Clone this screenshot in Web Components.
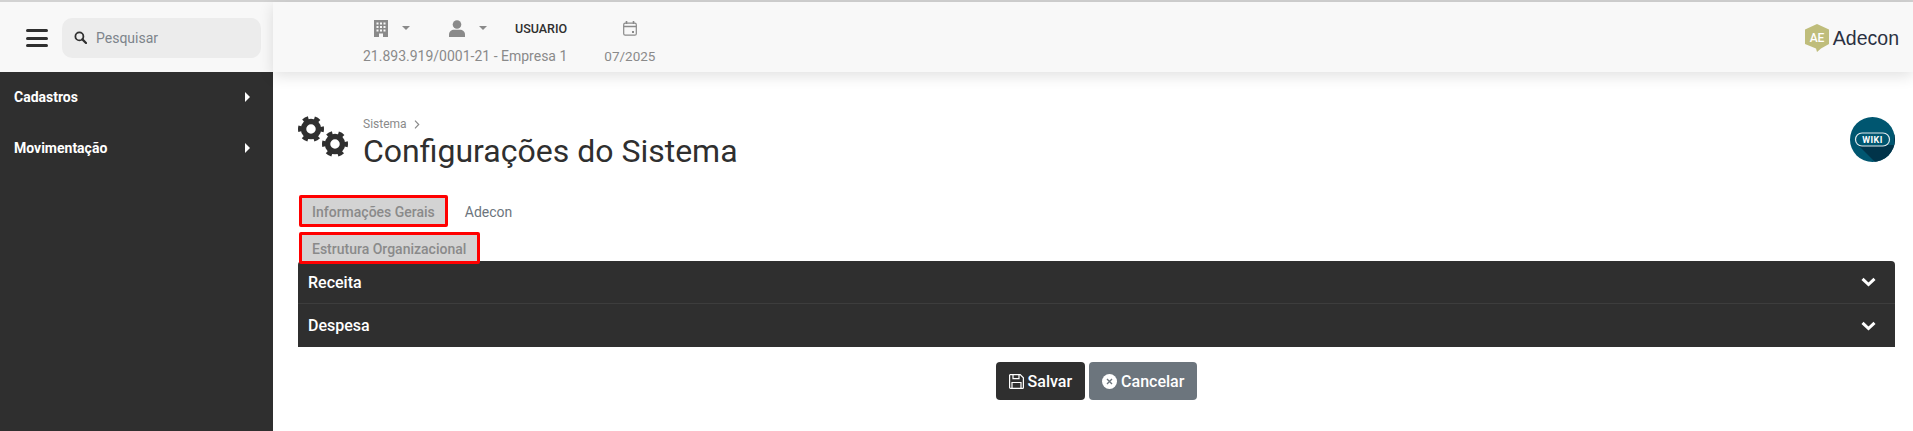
<!DOCTYPE html>
<html lang="pt-BR">
<head>
<meta charset="utf-8">
<title>Configurações do Sistema</title>
<style>
html,body{margin:0;padding:0;height:100%;background:#fff;overflow:hidden}
body{font-family:Roboto,sans-serif}
</style>
</head>
<body>
<app-shell>
    <side-menu slot="side">
        <menu-item>Cadastros</menu-item>
        <menu-item>Movimentação</menu-item>
    </side-menu>
    <top-bar slot="top"></top-bar>
    <page-head slot="main" crumb="Sistema" title="Configurações do Sistema"></page-head>
    <tab-row slot="main">
        <tab-link active>Informações Gerais</tab-link>
        <tab-link>Adecon</tab-link>
        <tab-link active second>Estrutura Organizacional</tab-link>
    </tab-row>
    <acc-panel slot="main">
        <acc-row>Receita</acc-row>
        <acc-row>Despesa</acc-row>
    </acc-panel>
    <form-actions slot="main"></form-actions>
</app-shell>

<script>
class AppShell extends HTMLElement{
    connectedCallback(){
        this.attachShadow({mode:"open"})
        this.shadowRoot.innerHTML=`
        <style>
        :host{display:flex;flex-direction:column;height:431px;box-sizing:border-box;border-top:2px solid #d2d2d2}
        .body{flex:1;display:flex;min-height:0}
        .left{width:273px;flex:none;display:flex;flex-direction:column}
        .right{flex:1;min-width:0;display:flex;flex-direction:column}
        main{flex:1;padding:39px 18px 0 25px}
        </style>
        <div class="body">
            <div class="left"><slot name="side"></slot></div>
            <div class="right">
                <slot name="top"></slot>
                <main><slot name="main"></slot></main>
            </div>
        </div>`
    }
}

class SideMenu extends HTMLElement{
    connectedCallback(){
        this.attachShadow({mode:"open"})
        this.shadowRoot.innerHTML=`
        <style>
        :host{display:flex;flex-direction:column;flex:1}
        .brand{height:70px;background:#f8f8f8;display:flex;align-items:center;padding-left:26px;gap:14px;box-sizing:border-box}
        .burger{width:22px;height:18px;display:flex;flex-direction:column;justify-content:space-between;margin-top:2px}
        .burger i{display:block;height:3px;background:#2f2f2f;border-radius:2px}
        .search{width:199px;height:40px;margin-top:1px;background:#ececec;border-radius:10px;display:flex;align-items:center;padding-left:12px;box-sizing:border-box;gap:9px;
            font:14px Roboto,sans-serif;color:#7d848b}
        .nav{flex:1;background:#2f2f2f;padding-top:12px}
        </style>
        <div class="brand">
            <div class="burger"><i></i><i></i><i></i></div>
            <div class="search">
                <svg width="13" height="13" viewBox="0 0 13 13" fill="none" stroke="#2f2f2f"><circle cx="5.4" cy="5.4" r="4" stroke-width="1.8"/><path d="M8.4 8.4l3.6 3.6" stroke-width="2.2" stroke-linecap="round"/></svg>
                <span>Pesquisar</span>
            </div>
        </div>
        <div class="nav"><slot></slot></div>`
    }
}

class MenuItem extends HTMLElement{
    connectedCallback(){
        this.attachShadow({mode:"open"})
        this.shadowRoot.innerHTML=`
        <style>
        :host{display:flex;align-items:center;justify-content:space-between;height:26px;margin-bottom:25px;padding:0 23px 0 14px;
            font:700 14px Roboto,sans-serif;color:#fff}
        .arrow{width:0;height:0;border-left:5.5px solid #fff;border-top:5px solid transparent;border-bottom:5px solid transparent}
        </style>
        <slot></slot><span class="arrow"></span>`
    }
}

class TopBar extends HTMLElement{
    connectedCallback(){
        this.attachShadow({mode:"open"})
        this.shadowRoot.innerHTML=`
        <style>
        :host{display:flex;height:70px;background:#f8f8f8;box-shadow:0 4px 14px rgba(0,0,0,.12);position:relative;
            font:14px Roboto,sans-serif;color:#8a8a8a;padding-left:90px;padding-right:14px;box-sizing:border-box;align-items:flex-start}
        .col{display:flex;flex-direction:column;margin-top:14px}
        .icons{display:flex;align-items:center;height:24px;margin-bottom:8px}
        .caret{width:0;height:0;border-top:4px solid #8a8a8a;border-left:4px solid transparent;border-right:4px solid transparent;margin:0 0 0 14px}
        .user{font-weight:500;font-size:12.5px;color:#2f2f2f;margin-left:28px}
        .date{margin-left:37px;align-items:center;font-size:13.5px}
        .logo{margin-left:auto;display:flex;align-items:center;gap:4px;margin-top:22px;
            font:19.5px "Liberation Sans",Arial,sans-serif;color:#2b3142}
        </style>
        <div class="col">
            <div class="icons">
                <svg style="margin-left:11px" width="14" height="17" viewBox="0 0 14 17"><path fill="#8a8a8a" fill-rule="evenodd" d="M0 0h14v17H9v-3.500H5V17H0zM2.500 2.500v2h2v-2zM6 2.500v2h2v-2zM9.500 2.500v2h2v-2zM2.500 6v2h2V6zM6 6v2h2V6zM9.500 6v2h2V6zM2.500 9.500v2h2v-2zM6 9.500v2h2v-2zM9.500 9.500v2h2v-2z"/></svg>
                <span class="caret"></span>
                <svg style="margin-left:39px" width="16" height="17" viewBox="0 0 16 17" fill="#8a8a8a"><circle cx="8" cy="4.500" r="4.300"/><path d="M0 17v-2.500C0 11.500 2.500 9.800 5 9.800h6c2.500 0 5 1.700 5 4.700V17z"/></svg>
                <span class="caret"></span>
                <span class="user">USUARIO</span>
            </div>
            <span>21.893.919/0001-21 - Empresa 1</span>
        </div>
        <div class="col date">
            <div class="icons">
                <svg width="14" height="15" viewBox="0 0 14 15" fill="none" stroke="#8a8a8a"><rect x=".7" y="2.200" width="12.600" height="12" rx="1.500" stroke-width="1.200"/><path d="M.7 5.500h12.600M3.500 0v3M10.500 0v3" stroke-width="1.600"/><rect x="9" y="10" width="2" height="2" fill="#8a8a8a" stroke="none"/></svg>
            </div>
            <span>07/2025</span>
        </div>
        <div class="logo">
            <svg width="24" height="28" viewBox="0 0 24 28"><path fill="#bfbd7b" d="M12 0l12 5.500v14.500l-8 4.500-4 3.500-1-3.500-11-4.500V5.500z"/><text x="12" y="18" text-anchor="middle" font-family="Roboto,sans-serif" font-weight="500" font-size="12" fill="#fff">AE</text></svg>
            <span>Adecon</span>
        </div>`
    }
}

class PageHead extends HTMLElement{
    connectedCallback(){
        this.attachShadow({mode:"open"})
        const gear=(cx,cy)=>`
            <circle cx="${cx}" cy="${cy}" r="7.500" fill="none" stroke="#2f2f2f" stroke-width="5.500"/>
            <circle cx="${cx}" cy="${cy}" r="11" fill="none" stroke="#2f2f2f" stroke-width="4" stroke-dasharray="5.500 6.020" stroke-dashoffset="2.750"/>`
        this.shadowRoot.innerHTML=`
        <style>
        :host{display:flex;align-items:flex-start;height:84px;color:#2f2f2f;font-family:Roboto,sans-serif}
        .gears{flex:none;margin:5px 15px 0 0}
        .txt{flex:1;display:flex;flex-direction:column;margin-top:6px}
        .crumb{font-size:12px;line-height:14px;color:#8a8a8a;display:flex;align-items:center;gap:7px}
        h1{margin:1px 0 0;font-weight:400;font-size:32px;line-height:38px;color:#2f2f2f}
        .wiki{flex:none;margin-top:6px}
        </style>
        <svg class="gears" width="50" height="42" viewBox="0 0 50 42">${gear(13,13)}${gear(37,28)}</svg>
        <div class="txt">
            <div class="crumb"><span>${this.getAttribute('crumb')}</span><svg width="6" height="9" viewBox="0 0 6 9" fill="none" stroke="#8a8a8a" stroke-width="1.200"><path d="M1 .7l3.700 3.800L1 8.300"/></svg></div>
            <h1>${this.getAttribute('title')}</h1>
        </div>
        <svg class="wiki" width="45" height="45" viewBox="0 0 45 45">
            <defs><clipPath id="c"><circle cx="22.500" cy="22.500" r="22.500"/></clipPath></defs>
            <circle cx="22.500" cy="22.500" r="22.500" fill="#005670"/>
            <path clip-path="url(#c)" fill="#01344a" d="M8 28h36V17l8 8v25H30z"/>
            <rect x="5.500" y="16" width="34" height="13" rx="6.500" fill="#005670" stroke="#dfe8ec" stroke-width="1.200"/>
            <text x="22.500" y="26" text-anchor="middle" font-family="Roboto,sans-serif" font-weight="700" font-size="9" letter-spacing=".4" fill="#fff">WIKI</text>
        </svg>`
    }
}

class TabRow extends HTMLElement{
    connectedCallback(){
        this.attachShadow({mode:"open"})
        this.shadowRoot.innerHTML=`
        <style>
        :host{display:flex;flex-wrap:wrap;width:400px;row-gap:5px;margin-left:1px;column-gap:1px}
        </style>
        <slot></slot>`
    }
}

class TabLink extends HTMLElement{
    connectedCallback(){
        this.attachShadow({mode:"open"})
        this.shadowRoot.innerHTML=`
        <style>
        :host{display:flex;align-items:center;box-sizing:border-box;height:32px;padding:2px 16px 0;
            font:14px Roboto,sans-serif;color:#6c757d}
        :host([active]){background:#d3d3d3;border:3px solid #f00;border-radius:2px;padding:2px 10px 0;font-weight:500;color:#8a8a8a}
        :host([second]){flex-basis:181px;flex-grow:0;margin-bottom:-3px;position:relative;z-index:1}
        </style>
        <slot></slot>`
    }
}

class AccPanel extends HTMLElement{
    connectedCallback(){
        this.attachShadow({mode:"open"})
        this.shadowRoot.innerHTML=`
        <style>
        :host{display:block;background:#2f2f2f;border-radius:4px 4px 0 0;overflow:hidden}
        </style>
        <slot></slot>`
    }
}

class AccRow extends HTMLElement{
    connectedCallback(){
        this.attachShadow({mode:"open"})
        this.shadowRoot.innerHTML=`
        <style>
        :host{display:flex;align-items:center;justify-content:space-between;height:42px;padding:0 19px 0 10px;
            font:500 16px Roboto,sans-serif;color:#fff}
        :host(:first-child){border-bottom:1px solid #3d3d3d}
        :host(:last-child){height:43px}
        </style>
        <slot></slot>
        <svg width="15" height="10" viewBox="0 0 15 10" fill="none" stroke="#fff" stroke-width="3"><path d="M1.500 1.800l6 5.700 6-5.700"/></svg>`
    }
}

class FormActions extends HTMLElement{
    connectedCallback(){
        this.attachShadow({mode:"open"})
        this.shadowRoot.innerHTML=`
        <style>
        :host{display:flex;justify-content:center;gap:4px;margin-top:15px}
        button{height:38px;border:0;border-radius:4px;color:#fff;font:500 16px Roboto,sans-serif;display:flex;align-items:center;gap:4px;padding:0 13px}
        .save{background:#2f2f2f}
        .cancel{background:#6c757d}
        </style>
        <button class="save">
            <svg width="15" height="15" viewBox="0 0 15 15" fill="none" stroke="#fff" stroke-width="1.200"><path d="M1.200.6h10l3.200 3.200v9.600a1 1 0 0 1-1 1H1.600a1 1 0 0 1-1-1V1.200z"/><path d="M4 .6v4h6v-4M3 14.400V8.500h9v5.900"/></svg>
            Salvar
        </button>
        <button class="cancel">
            <svg width="15" height="15" viewBox="0 0 15 15"><circle cx="7.500" cy="7.500" r="7.500" fill="#fff"/><path d="M5 5l5 5M10 5l-5 5" stroke="#6c757d" stroke-width="1.400"/></svg>
            Cancelar
        </button>`
    }
}

customElements.define("app-shell",AppShell)
customElements.define("side-menu",SideMenu)
customElements.define("menu-item",MenuItem)
customElements.define("top-bar",TopBar)
customElements.define("page-head",PageHead)
customElements.define("tab-row",TabRow)
customElements.define("tab-link",TabLink)
customElements.define("acc-panel",AccPanel)
customElements.define("acc-row",AccRow)
customElements.define("form-actions",FormActions)
</script>
</body>
</html>
